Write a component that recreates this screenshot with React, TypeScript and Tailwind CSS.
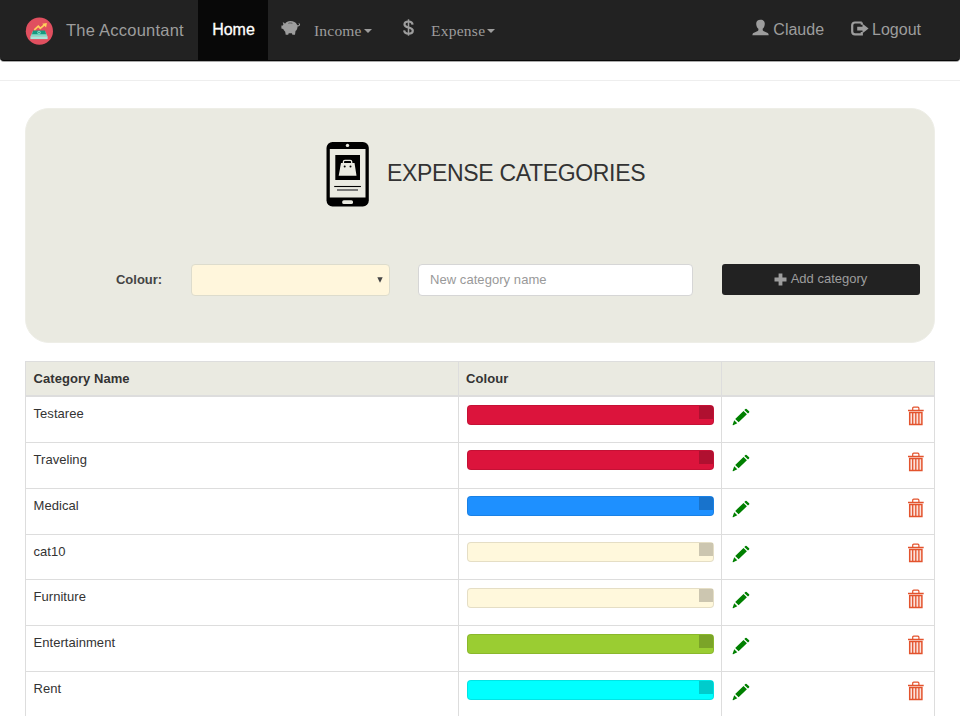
import React from "react";

const SANS = "font-['Liberation_Sans',Arial,sans-serif]";
const SERIF = "font-['Liberation_Serif','Times_New_Roman',serif]";

const rows = [
  { name: "Testaree", color: "bg-[#dc143c]", corner: "bg-[#b01030]" },
  { name: "Traveling", color: "bg-[#dc143c]", corner: "bg-[#b01030]" },
  { name: "Medical", color: "bg-[#1e90ff]", corner: "bg-[#1873cc]" },
  { name: "cat10", color: "bg-[#fff8dc]", corner: "bg-[#ccc6b0]" },
  { name: "Furniture", color: "bg-[#fff8dc]", corner: "bg-[#ccc6b0]" },
  { name: "Entertainment", color: "bg-[#9acd32]", corner: "bg-[#7ba428]" },
  { name: "Rent", color: "bg-[#00ffff]", corner: "bg-[#00cccc]" },
];

function Logo() {
  return (
    <svg width="28" height="28" viewBox="0 0 28 28" className="mt-px shrink-0">
      <circle cx="14.400" cy="14.200" r="13.600" fill="#e04f5f" />
      <path d="M8 14h12l2.600 5.500H5.400z" fill="#84dbc8" />
      <path d="M5.400 19.300h17.200v2.800H5.400z" fill="#a4e9da" />
      <path d="M8.200 13.600h11.800l1.100 3.600H7z" fill="#159a80" />
      <circle cx="14" cy="15.500" r="1.700" fill="#84dbc8" />
      <circle cx="14" cy="15.500" r=".8" fill="#159a80" />
      <path d="M9.300 12.800l4-3.700 2 2.300 4.400-3.700" fill="none" stroke="#ffd05b" strokeWidth="1.700" />
      <path d="M17.200 6.700l4.700-.7-.8 4.500z" fill="#ffd05b" />
    </svg>
  );
}

function PiggyIcon() {
  return (
    <svg width="20" height="16" viewBox="0 0 20 16" fill="#9d9d9d">
      <path fillRule="evenodd" d="M4 3.800C5.200 2 7 1.100 9.300 1.100c3.200 0 5.700 1.200 6.700 3.600.3.700 1.300.8 1.800.3.500-.4.200-1-.3-.9l.2-.9c1.200-.1 1.800 1.200 1.100 2.200-.6.900-1.400 1.200-2.300 1.100.1 1.900-.6 3.500-2 4.600L14 14.700h-2.600l-.5-1.400H7.700l-.5 1.400H4.700l-.5-3C3.100 10.900 2.500 10 2.200 9.100L.4 8.400V5.600l1.500-.2c.1-.4.3-.7.5-1L1.700 2.200c1 .1 1.800.7 2.300 1.600zM7.200 3l.3.500c1.100-.3 2.600-.3 3.700 0l.3-.5C10.300 2.500 8.400 2.500 7.200 3z" />
    </svg>
  );
}

function DollarIcon() {
  return (
    <svg width="12" height="18" viewBox="0 0 12 18" fill="none" stroke="#9d9d9d">
      <path d="M6.500 0.300v16.400" strokeWidth="1.500" />
      <path d="M10.600 5.600C10.300 3.400 8.700 2.500 6.500 2.500S2.500 3.500 2.500 5.500c0 4.200 8.300 1.900 8.300 6.200 0 1.900-1.900 2.900-4.200 2.900s-4.200-1-4.500-3.300" strokeWidth="2.200" />
    </svg>
  );
}

function UserIcon() {
  return (
    <svg width="17" height="17" viewBox="0 0 17 17" fill="#9d9d9d">
      <path d="M8.500.7c2.700 0 4.300 1.500 4.300 4 0 2.200-.9 4.100-2.100 5v1.300c0 .5.300.8.700 1l3.700 1.700c1 .4 1.500 1 1.600 2.600H.4c.1-1.600.600-2.200 1.600-2.600l3.700-1.700c.4-.2.700-.500.700-1V9.700c-1.300-.9-2.200-2.800-2.200-5 0-2.500 1.600-4 4.300-4z" />
    </svg>
  );
}

function LogoutIcon() {
  return (
    <svg width="18" height="16" viewBox="0 0 18 16">
      <path d="M10.800 1.500H4Q1.200 1.500 1.200 4.200v6.400Q1.200 13.400 4 13.400h6.800v-2.400M10.800 1.500v2.200" fill="none" stroke="#9d9d9d" strokeWidth="2.200" />
      <path d="M11.500 2.800L17.600 7.500 11.500 12.200V9.400H6.200V5.700h5.300z" fill="#9d9d9d" />
    </svg>
  );
}

function PhoneIcon() {
  return (
    <svg width="44" height="66" viewBox="0 0 44 66">
      <rect x="0.500" y="1" width="42.300" height="64.500" rx="6" fill="#000" />
      <rect x="3.800" y="8" width="35.700" height="48.500" fill="#eaeae1" />
      <circle cx="21.500" cy="4.400" r="1.700" fill="#eaeae1" />
      <rect x="16.200" y="59.200" width="10.800" height="3.800" rx="1.600" fill="#eaeae1" />
      <rect x="9.300" y="14" width="24.700" height="25" fill="#000" />
      <path d="M15 22h13.500l2 12.800H12.700z" fill="#eaeae1" />
      <path d="M17.400 23v-2.200q0-1.500 1.500-1.500h5.300q1.500 0 1.500 1.500V23" fill="none" stroke="#eaeae1" strokeWidth="1.300" />
      <circle cx="18.700" cy="25.600" r="1" />
      <circle cx="24.500" cy="25.600" r="1" />
      <path d="M8.200 45.500h26.700" stroke="#000" strokeWidth="1.100" />
      <path d="M11 49h21" stroke="#666" strokeWidth="1.700" />
    </svg>
  );
}

function PencilIcon() {
  return (
    <svg width="18" height="18" viewBox="0 0 18 18" fill="#008000">
      <path d="M13.400.9q.6-.5 1.200 0l2.500 2.400q.5.600 0 1.100l-1.100 1-3.700-3.500zM11.500 2.900l3.400 3.400-8.300 7.900-3.400-3.300zM2.200 12.200l3.100 3.100-4.100 1.900q-.8.200-.5-.6z" />
    </svg>
  );
}

function TrashIcon() {
  return (
    <svg width="16" height="20" viewBox="0 0 16 20" fill="none" stroke="#e3532d">
      <path d="M4.700 4V2.200Q4.700 1.200 5.700 1.200h4.200q1 0 1 1V4" strokeWidth="1.200" />
      <path d="M0 4.500h15.700" strokeWidth="1.500" />
      <path d="M1.700 6.600h12.200v12H1.700z" strokeWidth="1.500" fill="#fbe1da" />
      <path d="M4.700 7v11.500M7.800 7v11.500M10.900 7v11.500" strokeWidth="1.300" />
    </svg>
  );
}

function Caret() {
  return <span className="ml-[2px] border-x-[4px] border-t-[4px] border-x-transparent border-t-[#9d9d9d]" />;
}

const cols = "grid grid-cols-[433px_263px_1fr]";

export default function App() {
  return (
    <div className={`h-[716px] w-[960px] overflow-hidden bg-white text-[13px] text-[#333] ${SANS}`}>
      <nav className="flex h-[61px] rounded-b-[4px] border-b border-[#080808] bg-[#222] text-[#9d9d9d] shadow-[0_1px_0_#aaa]">
        <div className="flex w-[198px] items-center pl-[25px]">
          <Logo />
          <span className="ml-[13px] whitespace-nowrap text-[16.500px] tracking-[0.230px]">The Accountant</span>
        </div>
        <div className="flex w-[70px] items-center justify-center bg-[#080808] pl-px text-[16px] text-white [-webkit-text-stroke:0.300px_white]">Home</div>
        <div className={`flex w-[121px] items-start pl-[13px] pt-[20px] ${SERIF}`}>
          <PiggyIcon />
          <span className="ml-[13px] flex items-center pt-px text-[15.500px] leading-[20px] tracking-[0.200px]">Income<Caret /></span>
        </div>
        <div className={`flex items-start pl-[13px] pt-[19px] ${SERIF}`}>
          <DollarIcon />
          <span className="ml-[17px] flex items-center pt-[2px] text-[15.500px] leading-[20px] tracking-[0.250px]">Expense<Caret /></span>
        </div>
        <div className="ml-auto flex gap-[27px] pr-[39px] pt-[19px] text-[16px] leading-[22px]">
          <div className="flex gap-[4px]"><UserIcon /><span>Claude</span></div>
          <div className="flex gap-[3px]"><div className="pt-[2px]"><LogoutIcon /></div><span>Logout</span></div>
        </div>
      </nav>
      <hr className="mt-[19px] border-[#eee]" />
      <main className="mx-[25px]">
        <section className="ml-[0.400px] mt-[27.400px] h-[234.600px] rounded-[24px] border border-[#eeeee7] bg-[#eaeae1] pt-[32px]">
          <div className="flex h-[66px] pl-[299.600px]">
            <PhoneIcon />
            <h1 className="ml-[17px] whitespace-nowrap pt-[18px] text-[23px] leading-[28px] tracking-[-0.330px]">EXPENSE CATEGORIES</h1>
          </div>
          <form className="mt-[57px] flex h-[32px] items-start">
            <label className="w-[164.600px] pl-[89.600px] pt-[6px] font-bold text-[#444]">Colour:</label>
            <div className="flex h-[31.500px] w-[199px] items-center justify-end rounded-[4px] border border-[#dddccd] bg-[#fff6dc] pr-[6px]">
              <svg width="6" height="6" viewBox="0 0 6 6"><path d="M.3.300h5.400L3 5.800z" fill="#444" /></svg>
            </div>
            <input className="ml-[28px] h-[31.500px] w-[275px] rounded-[4px] border border-[#d6d6d6] bg-white px-[11px] pb-px tracking-[0.060px] placeholder:text-[#999]" placeholder="New category name" />
            <button type="button" className="ml-[29px] flex h-[31px] w-[198px] items-center justify-center gap-[4px] rounded-[3px] bg-[#222] pb-[2px] pr-px text-[#9d9d9d]">
              <svg width="13" height="13" viewBox="0 0 13 13" className="mt-px"><path d="M4.600.500h3.800v4.100h4.100v3.800H8.400v4.100H4.600V8.400H.5V4.600h4.100z" fill="#9d9d9d" /></svg>
              Add category
            </button>
          </form>
        </section>
        <div className="mt-[18px] border-l border-r border-t border-[#ddd]">
          <div className={`${cols} h-[35.150px] border-b-2 border-[#ddd] bg-[#eaeae1] font-bold leading-[15px]`}>
            <div className="border-r border-[#ddd] pl-[7.500px] pt-[9px] tracking-[0.060px]">Category Name</div>
            <div className="border-r border-[#ddd] pl-[7px] pt-[9px] tracking-[0.100px]">Colour</div>
            <div />
          </div>
          {rows.map((row) => (
            <div key={row.name} className={`${cols} h-[45.830px] border-b border-[#ddd] leading-[15px]`}>
              <div className="border-r border-[#ddd] pl-[7.500px] pt-[9px] tracking-[0.050px]">{row.name}</div>
              <div className="border-r border-[#ddd] pl-[7.500px] pr-[7.500px] pt-[7.500px]">
                <div className={`flex h-[20px] justify-end rounded-[4px] border border-black/10 ${row.color}`}>
                  <div className={`h-[13px] w-[14px] ${row.corner}`} />
                </div>
              </div>
              <div className="flex justify-between pl-[10px] pr-[10px]">
                <div className="pt-[10.800px]"><PencilIcon /></div>
                <div className="pt-[8.800px]"><TrashIcon /></div>
              </div>
            </div>
          ))}
        </div>
      </main>
    </div>
  );
}
